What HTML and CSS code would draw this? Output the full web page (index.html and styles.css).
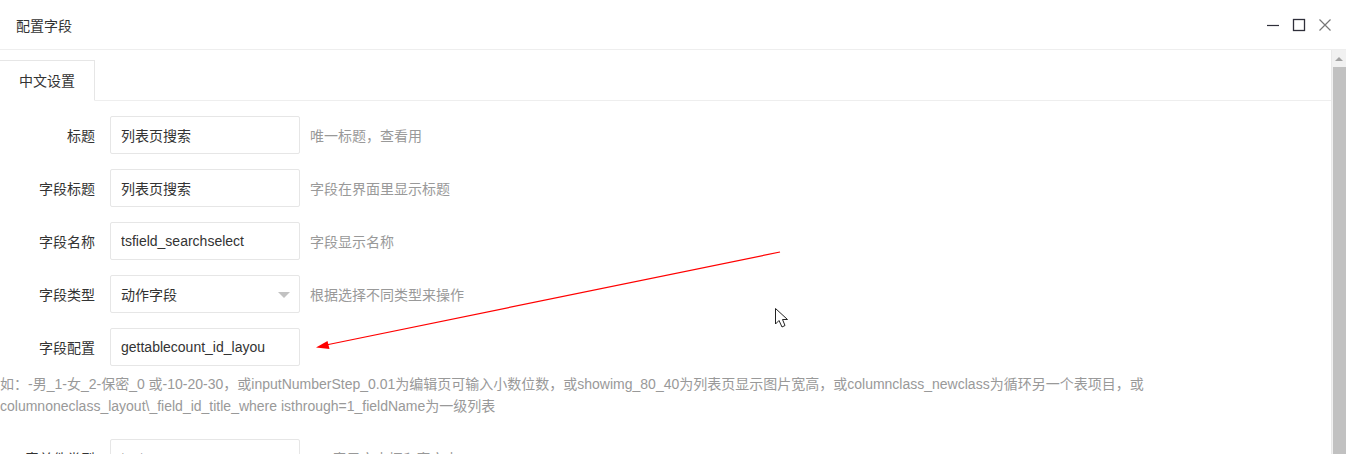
FILE: index.html
```html
<!DOCTYPE html>
<html lang="zh-CN">
<head>
    <meta charset="UTF-8">
    <meta name="viewport" content="width=device-width, initial-scale=1.0">
    <title>配置字段</title>
    <link rel="stylesheet" href="styles.css">
</head>
<body>
    <div class="layer">
        <div class="layer-title">
            <span>配置字段</span>
            <div class="layer-ops">
                <svg class="op" width="14" height="14" viewBox="0 0 14 14"><path d="M1 7.5h12" stroke="#2f2f3a" stroke-width="1.2"/></svg>
                <svg class="op" width="14" height="14" viewBox="0 0 14 14"><rect x="1.5" y="1.5" width="11" height="11" fill="none" stroke="#2f2f3a" stroke-width="1.3"/></svg>
                <svg class="op" width="14" height="14" viewBox="0 0 14 14"><path d="M1.5 1.5l11 11M12.5 1.5l-11 11" stroke="#777" stroke-width="1.2"/></svg>
            </div>
        </div>

        <div class="layer-body">
            <div class="content">
                <div class="tab-title">
                    <div class="tab this">中文设置</div>
                </div>

                <div class="form">
                    <div class="form-item">
                        <label class="form-label">标题</label>
                        <div class="input-block"><input class="input" value="列表页搜索"></div>
                        <div class="form-aux">唯一标题，查看用</div>
                    </div>
                    <div class="form-item">
                        <label class="form-label">字段标题</label>
                        <div class="input-block"><input class="input" value="列表页搜索"></div>
                        <div class="form-aux">字段在界面里显示标题</div>
                    </div>
                    <div class="form-item">
                        <label class="form-label">字段名称</label>
                        <div class="input-block"><input class="input" value="tsfield_searchselect"></div>
                        <div class="form-aux">字段显示名称</div>
                    </div>
                    <div class="form-item">
                        <label class="form-label">字段类型</label>
                        <div class="input-block select">
                            <input class="input" value="动作字段" readonly>
                            <i class="edge"></i>
                        </div>
                        <div class="form-aux">根据选择不同类型来操作</div>
                    </div>
                    <div class="form-item">
                        <label class="form-label">字段配置</label>
                        <div class="input-block"><input class="input" value="gettablecount_id_layou"></div>
                    </div>
                    <div class="form-tip">如：-男_1-女_2-保密_0 或-10-20-30，或inputNumberStep_0.01为编辑页可输入小数位数，或showimg_80_40为列表页显示图片宽高，或columnclass_newclass为循环另一个表项目，或<br>columnoneclass_layout\_field_id_title_where isthrough=1_fieldName为一级列表</div>
                    <div class="form-item">
                        <label class="form-label">表单件类型</label>
                        <div class="input-block"><input class="input" value="text"></div>
                        <div class="form-aux">text表示文本框和富文本</div>
                    </div>
                </div>
            </div>

            <div class="scrollbar">
                <div class="scroll-up"></div>
                <div class="scroll-thumb"></div>
            </div>
        </div>

        <svg class="mark" width="1346" height="454" viewBox="0 0 1346 454">
            <line x1="780" y1="252" x2="326" y2="345" stroke="#f00" stroke-width="1.2"/>
            <path d="M316 347.5 L327.5 341 L329.5 349 Z" fill="#f00"/>
            <path d="M775.5 308.5 L775.5 324 L779 320.5 L782 327 L785 325.5 L782.5 319.5 L787.5 319.5 Z" fill="#fff" stroke="#222" stroke-width="1"/>
        </svg>
    </div>
</body>
</html>
```

FILE: styles.css
```css
body { margin: 0; background: #fff; font-family: "Helvetica Neue", Helvetica, "Liberation Sans", "Noto Sans CJK SC", sans-serif; font-size: 14px; color: #333; overflow: hidden; }

.layer { position: relative; height: 454px; overflow: hidden; }
.layer-title { height: 49px; border-bottom: 1px solid #eee; display: flex; align-items: center; justify-content: space-between; padding: 0 14px 0 16px; color: #333; font-size: 14px; }
.layer-ops { display: flex; gap: 12px; align-items: center; }
.layer-ops .op { display: block; }

.layer-body { display: flex; height: 404px; }
.content { flex: 1; min-width: 0; }

.tab-title { margin-top: 10px; height: 40px; border-bottom: 1px solid #eee; display: flex; }
.tab { height: 40px; line-height: 40px; padding: 0 19px; box-sizing: border-box; }
.tab.this { border: 1px solid #e6e6e6; border-bottom-color: #fff; border-left: none; height: 41px; background: #fff; }

.form { padding-top: 15px; }
.form-item { display: flex; align-items: center; margin-bottom: 15px; }
.form-label { flex: 0 0 110px; text-align: right; padding-right: 15px; box-sizing: border-box; }
.input-block { position: relative; flex: 0 0 190px; }
.input { width: 100%; height: 38px; box-sizing: border-box; border: 1px solid #e6e6e6; border-radius: 2px; padding-left: 10px; font: inherit; color: #333; outline: none; }
.select .edge { position: absolute; right: 10px; top: 17px; border: 6px solid transparent; border-top-color: #c2c2c2; border-bottom: none; }
.form-aux { margin-left: 10px; color: #999; }
.form-tip { color: #999; line-height: 22px; margin: -8px 0 22px; }

.scrollbar { width: 14px; background: #f1f1f1; border-left: 1px solid #e8e8e8; display: flex; flex-direction: column; align-items: center; }
.scroll-up { margin: 7px 0 6px; border: 4px solid transparent; border-bottom: 4px solid #a3a3a3; border-top: none; }
.scroll-thumb { flex: 1; width: 13px; margin-left: 1px; background: #c1c1c1; }

.mark { position: absolute; left: 0; top: 0; pointer-events: none; }
```
